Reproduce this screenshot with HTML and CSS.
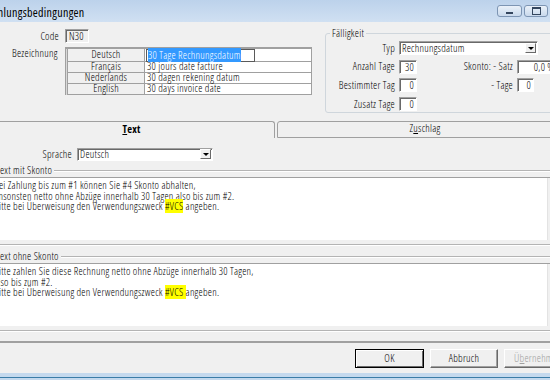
FILE: index.html
```html
<!DOCTYPE html>
<html lang="de">
<head>
  <meta charset="UTF-8">
  <title>Zahlungsbedingungen</title>
  <link rel="stylesheet" href="styles.css">
</head>
<body>
  <div class="window">
    <div class="titlebar">
      <span class="title">Zahlungsbedingungen</span>
      <div class="caption-btns">
        <span class="cap cap-min"></span>
        <span class="cap cap-max"></span>
        <span class="cap cap-close"></span>
      </div>
    </div>

    <div class="top">
      <div class="left">
        <div class="code-row">
          <label class="code-label">Code</label>
          <span class="field readonly">N30</span>
        </div>
        <div class="bez-row">
          <label class="bez-label">Bezeichnung</label>
          <div class="names">
            <table>
              <tr class="first">
                <td class="lang">Deutsch</td>
                <td class="val"><span class="edit"><span class="sel">30 Tage Rechnungsdatum</span></span></td>
              </tr>
              <tr>
                <td class="lang">Français</td>
                <td class="val">30 jours date facture</td>
              </tr>
              <tr>
                <td class="lang">Nederlands</td>
                <td class="val">30 dagen rekening datum</td>
              </tr>
              <tr>
                <td class="lang">English</td>
                <td class="val">30 days invoice date</td>
              </tr>
            </table>
          </div>
        </div>
      </div>

      <fieldset class="due">
        <legend>Fälligkeit</legend>
        <div class="due-grid">
          <label>Typ</label>
          <div class="combo wide">
            <span class="combo-text">Rechnungsdatum</span>
            <span class="combo-btn"></span>
          </div>

          <label>Anzahl Tage</label>
          <span class="field">30</span>
          <label>Skonto: - Satz</label>
          <span class="field">0,0 %</span>

          <label>Bestimmter Tag</label>
          <span class="field">0</span>
          <label>- Tage</label>
          <span class="field small">0</span>

          <label>Zusatz Tage</label>
          <span class="field">0</span>
        </div>
      </fieldset>
    </div>

    <div class="tabs">
      <div class="tab active"><span><u>T</u>ext</span></div>
      <div class="tab inactive"><span>Z<u>u</u>schlag</span></div>
    </div>

    <div class="panel">
      <div class="lang-row">
        <label>Sprache</label>
        <div class="combo lang-combo">
          <span class="combo-text">Deutsch</span>
          <span class="combo-btn"></span>
        </div>
      </div>

      <div class="group-head">
        <span>Text mit Skonto</span>
        <span class="rule"></span>
      </div>
      <div class="memo">
        <div class="memo-text">
          <div>Bei Zahlung bis zum #1 können Sie #4 Skonto abhalten,</div>
          <div>Ansonsten netto ohne Abzüge innerhalb 30 Tagen also bis zum #2.</div>
          <div>Bitte bei Überweisung den Verwendungszweck <span class="hl">#VCS</span> angeben.</div>
        </div>
        <div class="memo-scroll"></div>
      </div>
      <div class="group-foot"></div>

      <div class="group-head">
        <span>Text ohne Skonto</span>
        <span class="rule"></span>
      </div>
      <div class="memo">
        <div class="memo-text">
          <div>Bitte zahlen Sie diese Rechnung netto ohne Abzüge innerhalb 30 Tagen,</div>
          <div>also bis zum #2.</div>
          <div>Bitte bei Überweisung den Verwendungszweck <span class="hl">#VCS </span>angeben.</div>
        </div>
        <div class="memo-scroll"></div>
      </div>
      <div class="group-foot"></div>
    </div>

    <div class="buttons">
      <button class="btn default">OK</button>
      <button class="btn">Abbruch</button>
      <button class="btn" disabled>Ü<u>b</u>ernehmen</button>
    </div>

    <div class="frame-bottom"></div>
  </div>
</body>
</html>
```

FILE: styles.css
```css
* {
  box-sizing: border-box;
}

body {
  margin: 0;
  width: 550px;
  height: 380px;
  overflow: hidden;
  background: #f0f0f0;
  color: #000;
  font-family: "Open Sans", "Liberation Sans", sans-serif;
  font-stretch: 75%;
  font-weight: 300;
  font-size: 10.5px;
  line-height: 11px;
  letter-spacing: 0.25px;
}

.window {
  width: 580px;
}

/* title bar */
.titlebar {
  height: 22px;
  display: flex;
  align-items: center;
  background: linear-gradient(#bcd2eb, #d0e0f2);
}

.title {
  margin-left: -12px;
  padding-top: 2px;
  font-size: 12px;
  font-weight: 400;
  letter-spacing: 0.3px;
}

.caption-btns {
  margin-left: auto;
  display: flex;
  gap: 2px;
}

.cap {
  width: 25px;
  height: 12px;
  border: 1px solid #7d95b3;
  border-radius: 3px;
  background: linear-gradient(#eaf1f9, #c9d9ec);
  display: flex;
  align-items: center;
  justify-content: center;
}

.cap-min::after {
  content: "";
  width: 7px;
  height: 2px;
  margin-top: 3px;
  background: #34465e;
}

.cap-max {
  width: 24px;
}

.cap-max::after {
  content: "";
  width: 7px;
  height: 5px;
  border: 1px solid #34465e;
  border-top-width: 2px;
}

.cap-close {
  width: 30px;
  border-color: #8d3a2a;
  background: linear-gradient(#e8a493, #c7452b);
}

/* upper part */
.top {
  display: flex;
  height: 99px;
}

.left {
  width: 325px;
  padding-top: 7px;
}

.code-row {
  display: flex;
  align-items: center;
  height: 14px;
}

.code-label {
  width: 59px;
  margin-right: 6px;
  text-align: right;
}

.field {
  display: block;
  height: 14px;
  padding: 1px 2px 0;
  background: #fff;
  border: 1px solid;
  border-color: #a0a0a0 #fff #fff #a0a0a0;
  box-shadow: inset 1px 1px #696969;
  text-align: right;
  white-space: nowrap;
  overflow: hidden;
}

.field.readonly {
  width: 24px;
  background: #f0f0f0;
  text-align: left;
  padding-left: 3px;
}

.field.small {
  width: 17px;
}

.bez-row {
  display: flex;
  margin-top: 4px;
}

.bez-label {
  width: 65px;
  padding: 1px 0 0 12px;
  white-space: nowrap;
}

.names {
  width: 247px;
  height: 48px;
  background: #f0f0f0;
  border-top: 2px solid #a0a0a0;
  border-left: 1px solid #a0a0a0;
  box-shadow: inset 1px 0 #d8d8d8;
  padding-left: 1px;
}

.names table {
  width: 100%;
  border-collapse: collapse;
}

.names td {
  height: 11px;
  padding: 0;
  border: 1px solid #a0a0a0;
  line-height: 9px;
  white-space: nowrap;
}

.names tr.first td {
  height: 12px;
  border-top: none;
}

.names .lang {
  width: 77px;
  text-align: center;
  background: #f0f0f0;
}

.names .val {
  background: #fff;
  padding-left: 2px;
}

.edit {
  display: inline-block;
  width: 109px;
  height: 13px;
  margin: -1px 0 -2px -1px;
  padding: 1px 0 0 1px;
  border: 1px solid #5a5a5a;
  background: #fff;
}

.sel {
  background: #3399ff;
  color: #fff;
}

/* Fälligkeit group */
.due {
  flex: 1;
  min-width: 0;
  height: 85px;
  margin: 6px 10px 0 0;
  padding: 2px 0 0;
  border: 1px solid #cfd6dc;
  border-radius: 3px;
}

.due legend {
  margin-left: 4px;
  padding: 0 2px;
  line-height: 11px;
}

.due-grid {
  display: grid;
  grid-template-columns: 69px 18px 92px 40px;
  grid-auto-rows: 14px;
  column-gap: 4px;
  row-gap: 4.7px;
  align-items: center;
}

.due-grid label {
  text-align: right;
  white-space: nowrap;
}

.combo {
  display: flex;
  align-items: center;
  height: 14px;
  padding: 0 1px 0 2px;
  background: #fff;
  border: 1px solid;
  border-color: #a0a0a0 #fff #fff #a0a0a0;
  box-shadow: inset 1px 1px #696969;
}

.combo.wide {
  grid-column: 2 / 5;
  width: 139px;
}

.combo-text {
  flex: 1;
  padding-top: 1px;
}

.combo-btn {
  width: 11px;
  height: 10px;
  display: flex;
  align-items: center;
  justify-content: center;
  background: #f0f0f0;
  border: 1px solid;
  border-color: #fff #696969 #696969 #fff;
}

.combo-btn::after {
  content: "";
  border-left: 3px solid transparent;
  border-right: 3px solid transparent;
  border-top: 3px solid #000;
}

/* tabs */
.tabs {
  display: flex;
  height: 17px;
}

.tab {
  height: 17px;
  display: flex;
  align-items: center;
  justify-content: center;
  padding-bottom: 2px;
  border: 1px solid #a0a0a0;
}

.tab.active {
  width: 287px;
  margin-left: -12px;
  border-bottom: none;
  border-radius: 0 3px 0 0;
  font-weight: bold;
}

.tab.inactive {
  width: 296px;
  margin-left: 2px;
  border-radius: 3px 0 0 0;
}

/* tab page */
.panel {
  height: 205px;
  padding-top: 10px;
  border-bottom: 2px solid #a0a0a0;
}

.lang-row {
  display: flex;
  align-items: center;
  height: 12px;
}

.lang-row label {
  width: 72px;
  margin-right: 5px;
  text-align: right;
}

.lang-combo {
  width: 136px;
  height: 13px;
}

.group-head {
  display: flex;
  align-items: center;
  height: 11px;
  margin: 5px 0 0 -4px;
}

.group-head .rule {
  flex: 1;
  margin-left: 2px;
  border-top: 1px solid #b4b4b4;
  border-bottom: 1px solid #fff;
}

.memo {
  display: flex;
  height: 63px;
  margin: 1px 16px 0 -8px;
  background: #fff;
  border-top: 1px solid #a0a0a0;
}

.memo-text {
  flex: 1;
  padding: 2px 0 0 2px;
  line-height: 10.5px;
  white-space: nowrap;
  overflow: hidden;
}

.memo-scroll {
  width: 17px;
  background: #f0f0f0;
  border-left: 1px solid #e3e3e3;
}

.hl {
  background: #ffff00;
}

.group-foot {
  height: 2px;
  margin-top: 4px;
  border-top: 1px solid #b4b4b4;
  border-bottom: 1px solid #fff;
}

/* dialog buttons */
.buttons {
  display: flex;
  justify-content: flex-end;
  gap: 6px;
  height: 19px;
  margin-top: 6px;
  padding-right: 8px;
}

.btn {
  width: 68px;
  height: 19px;
  padding: 0;
  font: inherit;
  letter-spacing: inherit;
  color: #000;
  background: #f0f0f0;
  border: 1px solid;
  border-color: #fff #696969 #696969 #fff;
  box-shadow: inset -1px -1px #a0a0a0;
}

.btn.default {
  width: 69px;
  border-color: #000;
  box-shadow: inset 1px 1px #fff, inset -1px -1px #696969;
}

.btn:disabled {
  color: #a0a0a0;
}

.frame-bottom {
  height: 7px;
  margin-top: 5px;
  background: linear-gradient(#c4d9ee 0 4px, #3a7ca8 4px 5px, #c4d9ee 5px);
}
```
